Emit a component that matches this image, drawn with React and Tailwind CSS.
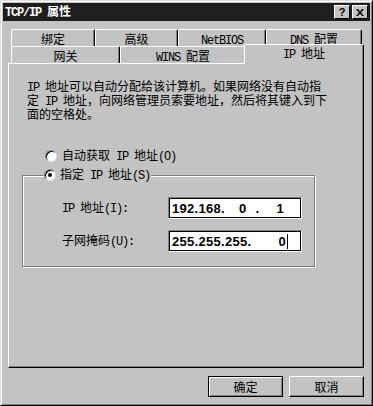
import React from 'react'

// half-width latin text, SimSun-like 6px advance
function L({ children }) {
  return <span className="font-['Liberation_Mono',monospace] tracking-[-1.2px] whitespace-pre">{children}</span>
}

function Tab({ w, pl = 0, children }) {
  return (
    <div
      className="h-full flex items-start justify-center pt-[3px] border-t border-l border-white border-r border-r-black rounded-t-[2px] shadow-[inset_-1px_0_0_#808080]"
      style={{ width: w, paddingLeft: pl }}
    >
      <span>{children}</span>
    </div>
  )
}

function Radio({ checked }) {
  return (
    <span className="w-[12px] h-[12px] shrink-0 rounded-full bg-white border border-t-[#808080] border-l-[#808080] border-r-[#dfdfdf] border-b-[#dfdfdf] shadow-[inset_1px_1px_0_#000] flex items-center justify-center">
      {checked && <span className="w-[4px] h-[4px] rounded-full bg-black" />}
    </span>
  )
}

function Field({ children }) {
  return (
    <div className="w-[134px] h-[22px] bg-white border border-t-[#808080] border-l-[#808080] border-r-white border-b-white shadow-[inset_0_0_0_1px_#000] flex items-center pl-[3px] font-['Liberation_Sans',sans-serif] font-bold text-[13px] tracking-[0.3px] leading-none">
      {children}
    </div>
  )
}

function Button({ primary, children }) {
  return (
    <div
      className={
        'w-[75px] h-[21px] flex items-center justify-center ' +
        (primary
          ? 'border border-black shadow-[inset_1px_1px_0_white,inset_-1px_-1px_0_#808080]'
          : 'border border-t-white border-l-white border-r-black border-b-black shadow-[inset_-1px_-1px_0_#808080]')
      }
    >
      {children}
    </div>
  )
}

export default function App() {
  return (
    <div className="w-[373px] h-[406px] bg-[#c3c3c3] border border-t-[#dfdfdf] border-l-[#dfdfdf] border-r-black border-b-black font-['Noto_Sans_CJK_SC',sans-serif] text-[12px] leading-[12px] text-black overflow-hidden">
      <div className="h-full border border-t-white border-l-white border-r-[#808080] border-b-[#808080] p-[1px] flex flex-col">
        {/* title bar */}
        <div className="h-[18px] bg-[#1e1e1e] flex items-center pl-[2px] pr-[2px] text-white font-bold">
          <span className="flex-1"><L>TCP/IP </L>属性</span>
          <div className="flex gap-[2px]">
            <div className="w-[16px] h-[14px] bg-[#c3c3c3] border border-t-white border-l-white border-r-black border-b-black text-black flex items-center justify-center text-[11px] font-bold font-['Liberation_Sans',sans-serif]">?</div>
            <div className="w-[16px] h-[14px] bg-[#c3c3c3] border border-t-white border-l-white border-r-black border-b-black text-black flex items-center justify-center">
              <svg width="8" height="7" viewBox="0 0 8 7">
                <path d="M0 0h2l2 2.5L6 0h2L5 3.5L8 7H6L4 4.5L2 7H0l3-3.5z" fill="#000" />
              </svg>
            </div>
          </div>
        </div>

        {/* tabs */}
        <div className="ml-[5px] w-[356px] mt-[8px]">
          <div className="flex h-[17px] pl-[3px]">
            <Tab w={84}>绑定</Tab>
            <Tab w={83}>高级</Tab>
            <Tab w={88}><L>NetBIOS</L></Tab>
            <Tab w={96}><L>DNS </L>配置</Tab>
          </div>
          <div className="flex h-[17px] pl-[3px] items-end">
            <Tab w={109}>网关</Tab>
            <Tab w={126}><L>WINS </L>配置</Tab>
            <div className="relative z-10 -ml-[2px] mb-[-1px] w-[120px] h-[20px] bg-[#c3c3c3] border-t border-l border-white border-r border-r-black rounded-t-[2px] shadow-[inset_-1px_0_0_#808080] flex justify-center pt-[2px]">
              <span><L>IP </L>地址</span>
            </div>
          </div>

          {/* panel */}
          <div className="h-[305px] border border-t-white border-l-white border-r-black border-b-black shadow-[inset_-1px_-1px_0_#808080] pl-[18px] pt-[16px]">
            <p>
              <L>IP </L>地址可以自动分配给该计算机。如果网络没有自动指<br />
              定<L> IP </L>地址，向网络管理员索要地址，然后将其键入到下<br />
              面的空格处。
            </p>

            <div className="mt-[30px] ml-[18px] flex items-center gap-[5px] h-[12px]">
              <Radio />
              <span>自动获取<L> IP </L>地址<L>(O)</L></span>
            </div>

            <fieldset className="mt-[7px] -ml-[5px] w-[293px] border border-[#808080] shadow-[1px_1px_0_white,inset_1px_1px_0_white] pb-[14px]">
              <legend className="ml-[21px] bg-[#c3c3c3] pr-[1px] flex items-center gap-[4px] h-[12px]">
                <Radio checked />
                <span>指定<L> IP </L>地址<L>(S)</L></span>
              </legend>
              <div className="mt-[16px] pl-[39px] flex flex-col gap-[11px]">
                <div className="flex items-center">
                  <span className="w-[106px]"><L>IP </L>地址<L>(I):</L></span>
                  <Field>
                    <span>192.168.</span>
                    <span className="ml-[14px]">0</span>
                    <span className="ml-[9px]">.</span>
                    <span className="ml-[17px]">1</span>
                  </Field>
                </div>
                <div className="flex items-center">
                  <span className="w-[106px]">子网掩码<L>(U):</L></span>
                  <Field>
                    <span>255.255.255.</span>
                    <span className="ml-[27px]">0</span>
                    <span className="ml-[1px] w-[1px] h-[15px] bg-black" />
                  </Field>
                </div>
              </div>
            </fieldset>
          </div>
        </div>

        {/* buttons */}
        <div className="mt-[8px] flex justify-end gap-[6px] pr-[6px]">
          <Button primary>确定</Button>
          <Button>取消</Button>
        </div>
      </div>
    </div>
  )
}
